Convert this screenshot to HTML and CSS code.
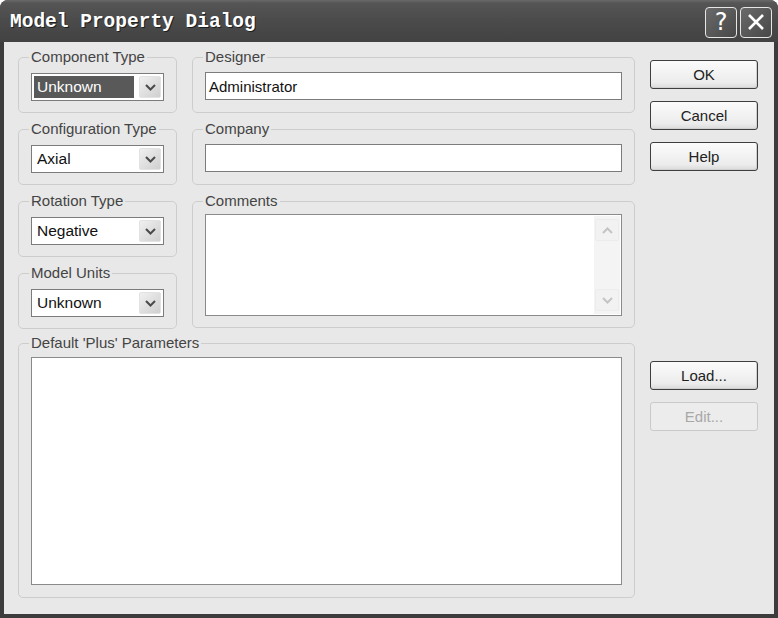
FILE: index.html
```html
<!DOCTYPE html>
<html lang="en">
<head>
    <meta charset="UTF-8">
    <title>Model Property Dialog</title>
    <link rel="stylesheet" href="styles.css">
</head>
<body>
    <div class="window">
        <div class="titlebar">
            <span class="title">Model Property Dialog</span>
            <div class="title-btns">
                <span class="tbtn help-btn">?</span>
                <span class="tbtn">
                    <svg width="20" height="20" viewBox="0 0 20 20"><path d="M3 3 L17 17 M17 3 L3 17" stroke="#fff" stroke-width="2.6" fill="none"/></svg>
                </span>
            </div>
        </div>

        <div class="client">
            <div class="layout">
                <div class="col-left">
                    <fieldset class="group">
                        <legend>Component Type</legend>
                        <div class="combo">
                            <span class="combo-text selected">Unknown</span>
                            <span class="combo-btn"><svg width="11" height="7" viewBox="0 0 11 7"><path d="M1 1 L5.5 5.5 L10 1" stroke="#4a4a4a" stroke-width="2" fill="none"/></svg></span>
                        </div>
                    </fieldset>
                    <fieldset class="group">
                        <legend>Configuration Type</legend>
                        <div class="combo">
                            <span class="combo-text">Axial</span>
                            <span class="combo-btn"><svg width="11" height="7" viewBox="0 0 11 7"><path d="M1 1 L5.5 5.5 L10 1" stroke="#4a4a4a" stroke-width="2" fill="none"/></svg></span>
                        </div>
                    </fieldset>
                    <fieldset class="group">
                        <legend>Rotation Type</legend>
                        <div class="combo">
                            <span class="combo-text">Negative</span>
                            <span class="combo-btn"><svg width="11" height="7" viewBox="0 0 11 7"><path d="M1 1 L5.5 5.5 L10 1" stroke="#4a4a4a" stroke-width="2" fill="none"/></svg></span>
                        </div>
                    </fieldset>
                    <fieldset class="group">
                        <legend>Model Units</legend>
                        <div class="combo">
                            <span class="combo-text">Unknown</span>
                            <span class="combo-btn"><svg width="11" height="7" viewBox="0 0 11 7"><path d="M1 1 L5.5 5.5 L10 1" stroke="#4a4a4a" stroke-width="2" fill="none"/></svg></span>
                        </div>
                    </fieldset>
                </div>

                <div class="col-mid">
                    <fieldset class="group">
                        <legend>Designer</legend>
                        <div class="edit">Administrator</div>
                    </fieldset>
                    <fieldset class="group">
                        <legend>Company</legend>
                        <div class="edit"></div>
                    </fieldset>
                    <fieldset class="group comments">
                        <legend>Comments</legend>
                        <div class="memo">
                            <div class="memo-body"></div>
                            <div class="vscroll">
                                <span class="sb-arrow"><svg width="11" height="7" viewBox="0 0 11 7"><path d="M1 6 L5.5 1.5 L10 6" stroke="#c4c4c4" stroke-width="2" fill="none"/></svg></span>
                                <span class="sb-track"></span>
                                <span class="sb-arrow"><svg width="11" height="7" viewBox="0 0 11 7"><path d="M1 1 L5.5 5.5 L10 1" stroke="#c4c4c4" stroke-width="2" fill="none"/></svg></span>
                            </div>
                        </div>
                    </fieldset>
                </div>

                <div class="col-btns">
                    <button class="btn">OK</button>
                    <button class="btn">Cancel</button>
                    <button class="btn">Help</button>
                </div>

                <fieldset class="group params">
                    <legend>Default 'Plus' Parameters</legend>
                    <div class="params-list"></div>
                </fieldset>

                <div class="col-btns lower">
                    <button class="btn">Load...</button>
                    <button class="btn" disabled>Edit...</button>
                </div>
            </div>
        </div>
    </div>
</body>
</html>
```

FILE: styles.css
```css
* {
    margin: 0;
    padding: 0;
    box-sizing: border-box;
}

body {
    width: 778px;
    height: 618px;
    background: #ffffff;
    font-family: 'Liberation Sans', Arial, sans-serif;
    font-size: 15px;
    overflow: hidden;
}

.window {
    width: 778px;
    height: 618px;
    background: #3c3c3c;
    border-radius: 8px 8px 0 0;
    padding: 0 4px 4px 4px;
    display: flex;
    flex-direction: column;
}

/* title bar */
.titlebar {
    height: 42px;
    margin: 0 -4px;
    padding: 0 6px 0 10px;
    border-radius: 8px 8px 0 0;
    background: linear-gradient(#6a6a6a 0px, #555555 3px, #4b4b4b 20px, #424242 42px);
    display: flex;
    align-items: center;
    justify-content: space-between;
}

.title {
    font-family: 'Liberation Mono', monospace;
    font-weight: bold;
    font-size: 19.5px;
    color: #ffffff;
    text-shadow: 1px 1px 0 #1e1e1e;
    padding-top: 2px;
}

.title-btns {
    display: flex;
    gap: 3px;
    padding-top: 2px;
}

.tbtn {
    width: 32px;
    height: 31px;
    border: 1.5px solid #e6e6e6;
    border-radius: 4px;
    background: linear-gradient(135deg, #6a6a6a, #484848);
    color: #ffffff;
    display: flex;
    align-items: center;
    justify-content: center;
}

.help-btn {
    font-family: 'DejaVu Sans', sans-serif;
    font-size: 24px;
}

/* client area */
.client {
    flex: 1;
    background: #e8e8e8;
    padding: 6px 16px 0 14px;
}

.layout {
    display: grid;
    grid-template-columns: 159px 443px 108px;
    column-gap: 15px;
    row-gap: 5px;
    align-items: start;
}

.col-left,
.col-mid {
    display: flex;
    flex-direction: column;
    gap: 7px;
}

.group {
    border: 1px solid #cdcdcd;
    border-radius: 5px;
    padding: 7px 12px 11px 12px;
    min-width: 0;
}

.group legend {
    font-size: 15px;
    line-height: 18px;
    color: #444444;
    padding: 0 2px;
    margin-left: -2px;
}

.col-mid .group {
    padding: 6px 12px 12px 12px;
}

.col-mid .comments {
    padding: 4px 12px 11px 12px;
}

/* combo box */
.combo {
    height: 28px;
    background: #ffffff;
    border: 1px solid #7c7c7c;
    display: flex;
    align-items: center;
    padding: 2px;
}

.combo-text {
    flex: 1;
    height: 100%;
    display: flex;
    align-items: center;
    padding-left: 3px;
    font-size: 15.5px;
    color: #111111;
    margin-right: 5px;
}

.combo-text.selected {
    background: #595959;
    color: #ffffff;
}

.combo-btn {
    width: 22px;
    height: 100%;
    background: linear-gradient(135deg, #f0f0f0, #cfcfcf);
    border: 1px solid #e2e2e2;
    border-radius: 2px;
    display: flex;
    align-items: center;
    justify-content: center;
}

/* edit boxes */
.edit {
    height: 28px;
    background: #ffffff;
    border: 1px solid #7c7c7c;
    padding-left: 3px;
    display: flex;
    align-items: center;
    color: #111111;
}

.memo {
    height: 102px;
    background: #ffffff;
    border: 1px solid #8a8a8a;
    display: flex;
    padding: 1px;
}

.memo-body {
    flex: 1;
}

.vscroll {
    width: 26px;
    display: flex;
    flex-direction: column;
    background: #f4f4f4;
}

.sb-arrow {
    height: 22px;
    margin: 3px 1px;
    border: 1px solid #ececec;
    border-radius: 2px;
    background: #f2f2f2;
    display: flex;
    align-items: center;
    justify-content: center;
}

.sb-track {
    flex: 1;
}

/* buttons */
.col-btns {
    display: flex;
    flex-direction: column;
    gap: 12px;
    padding-top: 12px;
}

.col-btns.lower {
    padding-top: 27px;
}

.btn {
    height: 29px;
    font-family: 'Liberation Sans', Arial, sans-serif;
    font-size: 15px;
    color: #222222;
    border: 1px solid #3e3e3e;
    border-radius: 3px;
    background: linear-gradient(#fbfbfb, #ececec 80%, #dadada);
    box-shadow: inset -1px -1px 0 #d0d0d0;
}

.btn:disabled {
    color: #a8a8a8;
    border-color: #cacaca;
    background: #ececec;
    box-shadow: none;
}

/* parameters list */
.params {
    grid-column: 1 / 3;
    padding: 5px 12px 12px 12px;
}

.params-list {
    height: 228px;
    background: #ffffff;
    border: 1px solid #8a8a8a;
}
```
